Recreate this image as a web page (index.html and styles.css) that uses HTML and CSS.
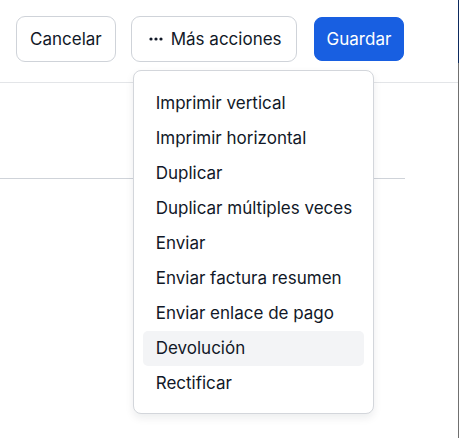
FILE: index.html
```html
<!DOCTYPE html>
<html lang="es">
<head>
<meta charset="utf-8">
<title>Acciones</title>
<link rel="stylesheet" href="styles.css">
</head>
<body>
<div class="page">
  <header class="toolbar">
    <button class="btn">Cancelar</button>
    <div class="more-wrap">
      <button class="btn btn-more">
        <svg class="dots" width="14" height="4" viewBox="0 0 14 4" aria-hidden="true">
          <circle cx="2" cy="2" r="1.6"/>
          <circle cx="7" cy="2" r="1.6"/>
          <circle cx="12" cy="2" r="1.6"/>
        </svg>
        Más acciones
      </button>
      <ul class="menu">
        <li class="menu-item">Imprimir vertical</li>
        <li class="menu-item">Imprimir horizontal</li>
        <li class="menu-item">Duplicar</li>
        <li class="menu-item">Duplicar múltiples veces</li>
        <li class="menu-item">Enviar</li>
        <li class="menu-item">Enviar factura resumen</li>
        <li class="menu-item">Enviar enlace de pago</li>
        <li class="menu-item is-active">Devolución</li>
        <li class="menu-item">Rectificar</li>
      </ul>
    </div>
    <button class="btn btn-primary">Guardar</button>
  </header>
  <section class="content">
    <div class="row"></div>
  </section>
</div>
</body>
</html>
```
FILE: styles.css
```css
* { box-sizing: border-box; }
html, body { margin: 0; padding: 0; height: 100%; }
body {
  font-family: Inter, "Noto Sans", sans-serif;
  color: #111827;
  background: #fff;
}
.page {
  min-height: 100%;
  border-right: 1px solid #707070;
  position: relative;
}
.page::before {
  content: "";
  position: absolute;
  right: -1px;
  top: 0;
  width: 1px;
  height: 63px;
  background: #0d2a5e;
}
.toolbar {
  display: flex;
  align-items: center;
  gap: 15px;
  padding: 16px 16px 20px;
  border-bottom: 1px solid #e3e5e8;
}
.btn {
  font: inherit;
  font-size: 17px;
  color: #111827;
  background: #fff;
  border: 1px solid #cfd3d9;
  border-radius: 9px;
  height: 46px;
  padding: 0 13px;
  display: inline-flex;
  align-items: center;
  gap: 8px;
  cursor: pointer;
}
.btn-more { padding: 0 14px 0 17px; }
.dots { fill: #111827; }
.btn-primary {
  background: #185fe1;
  border-color: #185fe1;
  color: #fff;
  height: 44px;
  margin-left: 2px;
  padding: 0 12px;
  border-radius: 8px;
}
.more-wrap { position: relative; }
.menu {
  position: absolute;
  top: 54px;
  left: 2px;
  width: 241px;
  margin: 0;
  padding: 15px 9px 12px;
  list-style: none;
  background: #fff;
  border: 1px solid #d3d6db;
  border-radius: 8px;
  box-shadow: 0 4px 8px rgba(17, 24, 39, 0.08);
  z-index: 2;
}
.menu-item {
  height: 35px;
  line-height: 35px;
  padding: 0 13px;
  font-size: 17px;
  border-radius: 5px;
  white-space: nowrap;
}
.menu-item.is-active { background: #f3f4f6; }
.row {
  width: 405px;
  height: 96px;
  border-bottom: 1px solid #cfd3d9;
}
```
